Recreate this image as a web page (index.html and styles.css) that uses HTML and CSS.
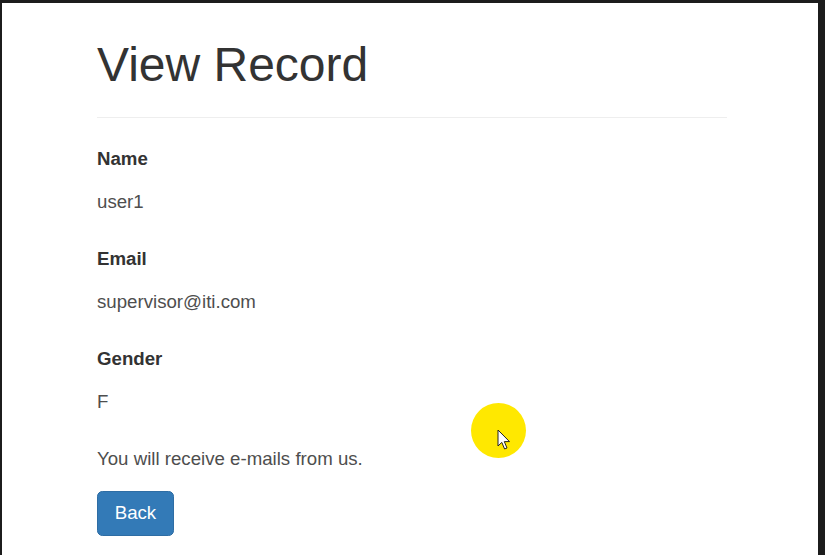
FILE: index.html
```html
<!DOCTYPE html>
<html>
<head>
<meta charset="utf-8">
<title>View Record</title>
<link rel="stylesheet" href="styles.css">
</head>
<body>
<div class="frame">
  <div class="container">
    <div class="page-header">
      <h1>View Record</h1>
    </div>
    <div class="field">
      <label class="field-label">Name</label>
      <p class="field-value">user1</p>
    </div>
    <div class="field">
      <label class="field-label">Email</label>
      <p class="field-value">supervisor@iti.com</p>
    </div>
    <div class="field">
      <label class="field-label">Gender</label>
      <p class="field-value">F</p>
    </div>
    <p class="note">You will receive e-mails from us.</p>
    <a class="btn-back" href="#">Back</a>
  </div>
</div>
<div class="cursor-highlight"></div>
<svg class="cursor" width="14" height="22" viewBox="0 0 14 22">
  <path d="M1 1 L1 17 L4.8 13.4 L7.6 20 L10 19 L7.3 12.6 L12.5 12.6 Z" fill="#fff" stroke="#222" stroke-width="1" stroke-linejoin="round"/>
</svg>
</body>
</html>
```

FILE: styles.css
```css
html, body {
  margin: 0;
  padding: 0;
  background: #1c1c1c;
  height: 555px;
  overflow: hidden;
}

body {
  position: relative;
  font-family: "Liberation Sans", Arial, sans-serif;
  color: #333;
}

.frame {
  margin: 3px 7px 0 2px;
  height: 552px;
  background: #fff;
  box-sizing: border-box;
}

.container {
  padding-left: 95px;
  width: 630px;
}

.page-header {
  padding-top: 36px;
  padding-bottom: 25.2px;
  border-bottom: 1px solid #eee;
  margin-bottom: 27px;
}

.page-header h1 {
  margin: 0;
  font-size: 48px;
  font-weight: 400;
  line-height: 52.8px;
  color: #333;
}

.field {
  margin-bottom: 20px;
}

.field-label {
  display: block;
  font-size: 18.67px;
  font-weight: 700;
  line-height: 27px;
  margin-bottom: 7px;
  color: #333;
}

.field-value {
  margin: 0;
  padding: 9.5px 0;
  font-size: 18.67px;
  line-height: 27px;
  color: #4e4e4e;
}

.note {
  margin: 0 0 19px;
  font-size: 18.67px;
  line-height: 27px;
  color: #4e4e4e;
}

.btn-back {
  display: inline-block;
  padding: 8.2px 16.7px;
  font-size: 18.67px;
  line-height: 26.67px;
  color: #fff;
  background: #337ab7;
  border: 1px solid #2e6da4;
  border-radius: 5.33px;
  text-decoration: none;
}

.cursor-highlight {
  position: absolute;
  left: 470.5px;
  top: 403px;
  width: 55px;
  height: 55px;
  border-radius: 50%;
  background: #ffe800;
}

.cursor {
  position: absolute;
  left: 497px;
  top: 429px;
}
```
